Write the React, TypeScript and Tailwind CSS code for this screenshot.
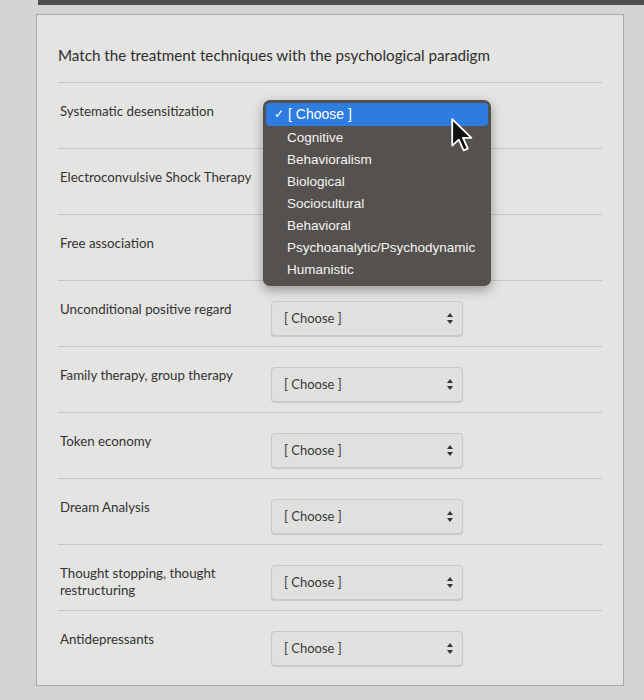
import React from "react";

const rows = [
  "Systematic desensitization",
  "Electroconvulsive Shock Therapy",
  "Free association",
  "Unconditional positive regard",
  "Family therapy, group therapy",
  "Token economy",
  "Dream Analysis",
  "Thought stopping, thought restructuring",
  "Antidepressants",
];

const options = [
  "Cognitive",
  "Behavioralism",
  "Biological",
  "Sociocultural",
  "Behavioral",
  "Psychoanalytic/Psychodynamic",
  "Humanistic",
];

function Arrows() {
  return (
    <svg width="6" height="11" viewBox="0 0 6 11" className="shrink-0">
      <path d="M3 0 L6 4 L0 4 Z" fill="#333" />
      <path d="M3 11 L6 7 L0 7 Z" fill="#333" />
    </svg>
  );
}

function Select() {
  return (
    <div className="w-[192px] h-[35px] flex items-center justify-between pl-[12px] pr-[9px] rounded-[4px] border border-[#c9c9c7] bg-[#e0e0de] shadow-[0_1px_1px_rgba(0,0,0,0.12)]">
      <span className="text-[13px] text-[#3a3a3a]">[ Choose ]</span>
      <Arrows />
    </div>
  );
}

function Cursor() {
  return (
    <svg width="24" height="36" viewBox="0 0 20 30" className="absolute left-[188px] top-[18px]">
      <path
        d="M1 1 L1 23 L6.5 18 L10.5 27 L14 25.5 L10 16.5 L17 16.5 Z"
        fill="#111"
        stroke="#fff"
        strokeWidth="1.5"
        strokeLinejoin="round"
      />
    </svg>
  );
}

function Dropdown() {
  return (
    <div className="absolute left-[-8px] top-[-3px] w-[228px] h-[186px] rounded-[7px] bg-[#55514e] shadow-[0_4px_12px_rgba(0,0,0,0.35)] px-[3px] pt-[3px] font-['Liberation_Sans',Arial,sans-serif] text-[13.5px] text-[#f4f4f4]">
      <div className="h-[23px] rounded-[4px] bg-[#2f7ce0] flex items-center pl-[8px] text-white text-[14px]">
        <span className="w-[14px] text-[12px]">✓</span>
        <span>[ Choose ]</span>
      </div>
      <div className="pt-[1px]">
        {options.map((o) => (
          <div key={o} className="h-[22px] flex items-center pl-[21px]">
            {o}
          </div>
        ))}
      </div>
      <Cursor />
    </div>
  );
}

export default function App() {
  return (
    <div className="w-[644px] h-[700px] bg-[#d4d4d2] relative overflow-hidden font-['Lato','Open_Sans',sans-serif]">
      <div className="h-[5px] ml-[38px] bg-[#4f4d4b]" />
      <div className="ml-[36px] mt-[9px] w-[588px] h-[672px] border border-[#a9a9a7] bg-[#e4e4e2] px-[21px]">
        <h1 className="pt-[29px] pb-[15px] text-[15.2px] text-[#2e2e2e]">
          Match the treatment techniques with the psychological paradigm
        </h1>
        {rows.map((label, i) => (
          <div key={label} className="border-t border-[#c6c6c4] flex pt-[20px] pb-[10px] min-h-[66px]">
            <div className="w-[213px] pl-[2px] pr-[10px] text-[13.3px] leading-[17px] text-[#333]">
              {label}
            </div>
            <div className="relative">
              {i === 0 ? <Dropdown /> : i > 2 ? <Select /> : <div className="w-[192px] h-[35px]" />}
            </div>
          </div>
        ))}
      </div>
    </div>
  );
}
